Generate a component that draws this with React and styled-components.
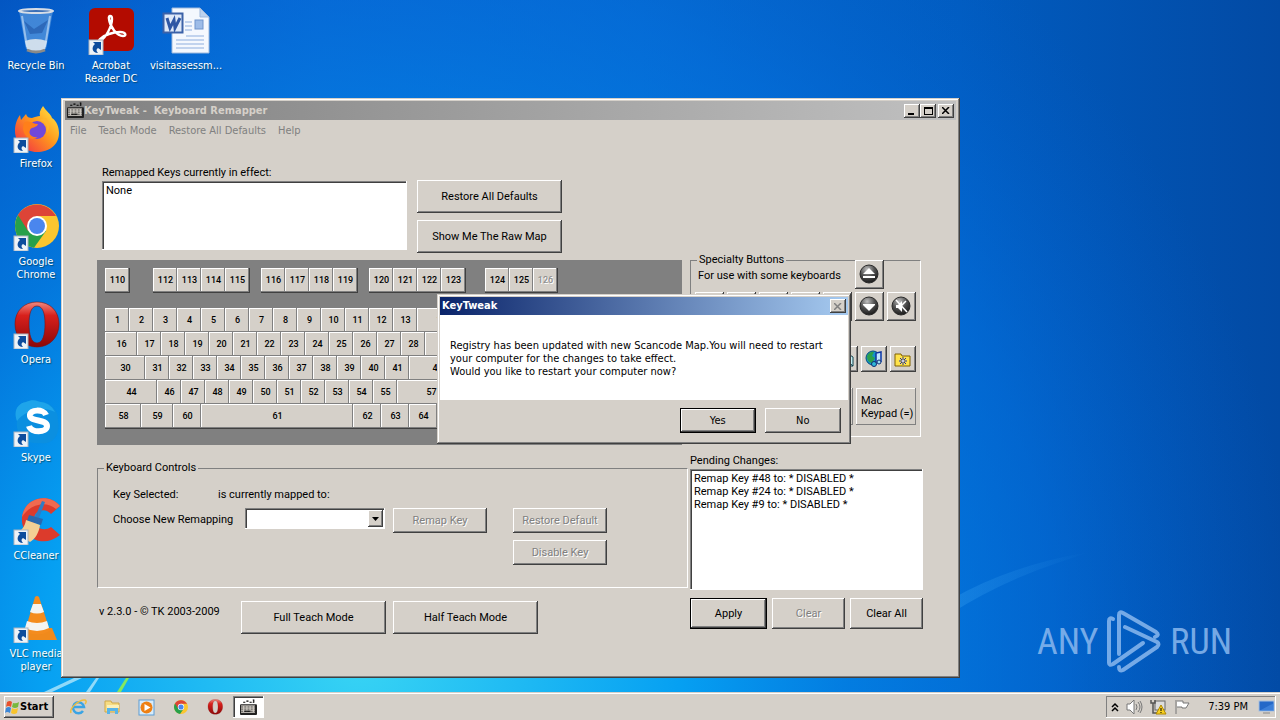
import React from 'react';
import styled, { createGlobalStyle, css } from 'styled-components';

const face = '#d5d0c9';
const sans = 'Roboto, "Liberation Sans", Arial, sans-serif';
const tahoma = '"DejaVu Sans Condensed", "DejaVu Sans", Tahoma, sans-serif';

const GlobalStyle = createGlobalStyle`
  * { box-sizing: border-box; }
  body { margin: 0; overflow: hidden; }
  button, select, input { font: inherit; color: inherit; }
`;

const raised = css`
  box-shadow: inset -1px -1px #404040, inset 1px 1px #fff, inset -2px -2px #808080;
`;
const sunken = css`
  box-shadow: inset -1px -1px #fff, inset 1px 1px #808080, inset 2px 2px #404040;
`;
const softSunken = css`
  box-shadow: inset -1px -1px #fff, inset 1px 1px #808080;
`;

/* ---------- desktop ---------- */

const Screen = styled.div`
  display: flex;
  flex-direction: column;
  height: 100vh;
  font: 11px/16px ${sans};
  color: #000;
`;

const Desktop = styled.main`
  position: relative;
  flex: 1;
  min-height: 0;
  overflow: hidden;
  background: linear-gradient(90deg, #0346b0 0%, #0a5cc6 25%, #0664c9 50%, #015cc0 75%, #024aa4 100%);
`;

const Wallpaper = styled.svg`
  position: absolute;
  inset: 0;
  width: 100%;
  height: 100%;
`;

const IconColumns = styled.div`
  position: relative;
  display: flex;
  gap: 3px;
  padding-top: 7px;
`;

const IconColumn = styled.div`
  display: flex;
  flex-direction: column;
  width: 72px;
`;

const DesktopIcon = styled.a`
  display: flex;
  flex-direction: column;
  align-items: center;
  gap: 4px;
  height: 98px;
  color: #fff;
  font: 11px/13px ${tahoma};
  text-align: center;
  text-decoration: none;
  text-shadow: 1px 1px 1px #0339;
  white-space: pre;
`;

const Watermark = styled.div`
  position: absolute;
  right: 48px;
  bottom: 18px;
  display: flex;
  align-items: center;
  gap: 8px;
  color: #8ab8ee;
  font: 36px/64px "Liberation Sans Narrow", "Roboto Condensed", Roboto, sans-serif;
  opacity: 0.85;
`;

/* ---------- windows ---------- */

const Frame = styled.section`
  position: absolute;
  left: ${props => props.$left}px;
  top: ${props => props.$top}px;
  padding: 3px;
  background: ${face};
  box-shadow: inset -1px -1px #404040, inset 1px 1px ${face}, inset -2px -2px #808080, inset 2px 2px #fff;
`;

const MainFrame = styled(Frame)`
  padding: 3px 4px 4px;
`;

const TitleBar = styled.header`
  display: flex;
  align-items: center;
  height: ${props => props.$active ? 18 : 19}px;
  padding: 0 2px;
  color: ${props => props.$active ? '#fff' : '#d5d0c9'};
  background: ${props => props.$active
    ? 'linear-gradient(90deg, #0a246a, #a6caf0)'
    : 'linear-gradient(90deg, #808080, #c0c0c0)'};
  font: bold 11px/18px ${tahoma};
  white-space: pre;
`;

const Title = styled.h1`
  flex: 1;
  margin: 0;
  font: inherit;
`;

const CaptionButton = styled.button`
  display: grid;
  place-items: center;
  width: 16px;
  height: 14px;
  margin-left: ${props => props.$apart ? 2 : 0}px;
  padding: 0;
  border: 0;
  background: ${face};
  ${raised}
`;

const MenuBar = styled.nav`
  display: flex;
  gap: 12px;
  padding: 1px 5px 0;
  height: 20px;
`;

const MenuItem = styled.button`
  padding: 0;
  border: 0;
  background: none;
  color: #808080;
  font: 11px/18px ${tahoma};
`;

const Button = styled.button`
  display: inline-flex;
  align-items: center;
  justify-content: center;
  width: ${props => props.$width}px;
  height: ${props => props.$height || 33}px;
  padding: 0;
  border: ${props => props.$default ? '1px solid #000' : '0'};
  background: ${face};
  white-space: nowrap;
  ${raised}
  &:disabled {
    color: #808080;
    text-shadow: 1px 1px #fff;
  }
`;

const Body = styled.div`
  display: grid;
  grid-template-columns: 591px 233px;
  gap: 2px;
  padding: 25px 33px 40px 32px;
`;

const Column = styled.div`
  display: flex;
  flex-direction: column;
`;

const RemappedRow = styled.div`
  display: flex;
  gap: 10px;
  padding-left: 5px;
`;

const ListField = styled.div`
  display: flex;
  flex-direction: column;
  width: ${props => props.$width}px;
`;

const ListBox = styled.select`
  width: 100%;
  height: ${props => props.$height}px;
  padding: 3px 2px 2px;
  border: 0;
  border-radius: 0;
  outline: 0;
  background: #fff;
  overflow: hidden;
  ${sunken}
  option {
    min-height: 13px;
    padding: 0 2px;
    line-height: 13px;
  }
`;

const SideButtons = styled.div`
  display: flex;
  flex-direction: column;
  gap: 7px;
  padding-top: 15px;
`;

/* ---------- keyboard ---------- */

const Keyboard = styled.div`
  width: 585px;
  height: 185px;
  margin-top: 7px;
  padding: 8px;
  background: #808080;
`;

const KeyGroup = styled.div`
  display: flex;
  margin-left: ${props => props.$before || 0}px;
  border-right: 1px solid #404040;
  border-bottom: 1px solid #404040;
`;

const FunctionRow = styled.div`
  display: flex;
  margin-bottom: 15px;
`;

const MainBlock = styled.div`
  width: 361px;
  border-right: 1px solid #404040;
  border-bottom: 1px solid #404040;
`;

const KeyRow = styled.div`
  display: flex;
`;

const Key = styled.button`
  width: ${props => props.$width}px;
  height: 24px;
  padding: 0 0 0 1px;
  border: 0;
  background: ${face};
  box-shadow: inset -1px -1px #808080, inset 1px 1px #fff;
  font: 500 9px/24px ${sans};
  &:disabled {
    color: #909090;
    text-shadow: 1px 1px #fff;
  }
`;

/* ---------- group boxes ---------- */

const GroupBox = styled.fieldset`
  min-width: 0;
  height: ${props => props.$height}px;
  margin: ${props => props.$before || 0}px ${props => props.$after || 0}px 0 0;
  padding: 0;
  border: 1px solid;
  border-color: #808080 #fff #fff #808080;
`;

const Legend = styled.legend`
  margin-left: 6px;
  padding: 0 2px;
  line-height: 14px;
`;

const Specialty = styled.div`
  margin-top: -7px;
  padding: 0 4px;
`;

const SpecialtyRow = styled.div`
  display: flex;
  justify-content: flex-end;
  gap: 3px;
  margin-top: ${props => props.$before || 0}px;
`;

const SpecialtyHint = styled.p`
  flex: 1;
  margin: 8px 0 0 3px;
`;

const EmptySlot = styled.span`
  width: 29px;
`;

const MediaButton = styled(Button)`
  width: ${props => props.$small ? 26 : 29}px;
  height: ${props => props.$small ? 26 : 29}px;
`;

const KeypadButton = styled(Button)`
  width: 60px;
  height: 37px;
  justify-content: flex-start;
  padding-left: 5px;
  line-height: 13px;
  text-align: left;
  box-shadow: inset -1px -1px #808080, inset 1px 1px #fff;
`;

const Controls = styled.div`
  display: grid;
  grid-template-columns: 132px 148px 120px 94px;
  row-gap: 5px;
  padding: 12px 15px 0;
`;

const SelectedKey = styled.div`
  grid-column: 1 / -1;
  display: flex;
`;

const SelectedLabel = styled.span`
  width: 105px;
`;

const ControlLabel = styled.label`
  padding-top: 4px;
`;

const Combo = styled.div`
  display: grid;
  width: 140px;
  height: 21px;
  padding: 2px;
  background: #fff;
  ${sunken}
`;

const ComboSelect = styled.select`
  grid-area: 1 / 1;
  appearance: none;
  border: 0;
  background: none;
  padding: 0 18px 0 2px;
`;

const ComboArrow = styled.span`
  grid-area: 1 / 1;
  justify-self: end;
  display: grid;
  place-items: center;
  width: 15px;
  background: ${face};
  pointer-events: none;
  ${raised}
`;

const ActionStack = styled.div`
  display: flex;
  flex-direction: column;
  gap: 7px;
`;

const FooterRow = styled.div`
  display: flex;
  align-items: flex-start;
  gap: ${props => props.$gap || 7}px;
  margin-top: ${props => props.$before}px;
`;

const Version = styled.span`
  width: 137px;
  margin-top: 3px;
  padding-left: 2px;
`;

/* ---------- message box ---------- */

const Message = styled.p`
  margin: 0;
  padding: 24px 25px 22px 10px;
  background: #fff;
  font: 11px/13px ${tahoma};
  white-space: pre-line;
`;

const MessageButtons = styled.footer`
  display: flex;
  justify-content: flex-end;
  gap: 9px;
  padding: 8px 7px 8px;
  font: 11px/13px ${tahoma};
`;

/* ---------- taskbar ---------- */

const Taskbar = styled.footer`
  display: flex;
  align-items: center;
  height: 28px;
  padding: 2px 4px 0;
  background: ${face};
  box-shadow: inset 0 1px ${face}, inset 0 2px #fff;
`;

const StartButton = styled.button`
  display: flex;
  align-items: center;
  height: 22px;
  width: 50px;
  padding: 0 1px;
  border: 0;
  background: ${face};
  font: bold 11px/20px ${tahoma};
  ${raised}
`;

const QuickLaunch = styled.div`
  flex: 1;
  display: flex;
  align-items: center;
  gap: 3px;
  padding-left: 9px;
`;

const QuickButton = styled.button`
  display: grid;
  place-items: center;
  width: 31px;
  height: 22px;
  padding: 0;
  border: 0;
  background: none;
  ${props => props.$active && css`
    background: #fff;
    ${sunken}
  `}
`;

const Tray = styled.div`
  display: flex;
  align-items: center;
  height: 22px;
  gap: 7px;
  padding: 0 1px 0 5px;
  font: 11px/20px ${tahoma};
  ${softSunken}
`;

const Clock = styled.time`
  margin: 0 3px 0 10px;
`;

/* ---------- drawings ---------- */

function ShortcutArrow() {
  return (
    <g>
      <rect x="2" y="33" width="14" height="15" fill="#eef3f8" stroke="#aab4c0" strokeWidth="1" />
      <path d="M6 35h8v8l-3-2c-2 1-2 3 0 5-6 0-7-6-3-9z" fill="#0d4c9c" />
    </g>
  );
}

function RecycleBinIcon() {
  return (
    <svg width="48" height="48">
      <path d="M7 4l7 38q10 6 20 0l7-38z" fill="#7eb1e6" fillOpacity=".5" />
      <path d="M13 34q10 -4 22 0l-2 8q-9 5-18 0z" fill="#e8ecf0" fillOpacity=".85" />
      <path d="M10 9l5 31M38 9l-5 31" stroke="#cfe4fa" strokeOpacity=".6" strokeWidth="2" />
      <path d="M12 14l10 8 14-9-6 13-12 1z" fill="#1a4c9c" fillOpacity=".5" />
      <ellipse cx="24" cy="4" rx="17" ry="2" fill="#3b6fb6" stroke="#d6dde6" strokeWidth="2" />
      <path d="M15 43q9 4 18 0" fill="none" stroke="#8a8a88" strokeWidth="3" />
    </svg>
  );
}

function AcrobatIcon() {
  return (
    <svg width="48" height="48">
      <rect x="2" y="1" width="45" height="43" rx="6" fill="#b30b00" />
      <path d="M13 34c6-3 12-15 12-22 0-4-4-4-3 0 1 8 8 17 14 17 4 0 3-4-3-4-7 0-16 3-20 7-3 4-1 4 0 2z" fill="none" stroke="#fff" strokeWidth="2.4" />
      <ShortcutArrow />
    </svg>
  );
}

function WordIcon() {
  return (
    <svg width="48" height="48">
      <path d="M10 1h28l9 9v36H10z" fill="#f4f8fe" stroke="#9fb9dc" />
      <path d="M38 1v9h9z" fill="#bcd2ee" stroke="#9fb9dc" />
      <path d="M14 33h28M14 37h28M14 41h28M24 29h18M23 15h7M23 19h7M23 23h7" stroke="#8eaede" />
      <rect x="33" y="13" width="8" height="9" fill="#9dbce8" stroke="#6f94cc" />
      <rect x="1.500" y="6.500" width="19" height="19" fill="#dfe9f8" stroke="#3c62a8" strokeWidth="2" />
      <path d="M5 11l3 10 4-8 1 8 5-10" fill="none" stroke="#2f57a4" strokeWidth="3" />
    </svg>
  );
}

function FirefoxIcon() {
  return (
    <svg width="48" height="48">
      <defs>
        <linearGradient id="foxBody" x1="1" y1="0" x2="0" y2="1">
          <stop offset="0" stopColor="#fff04a" />
          <stop offset=".45" stopColor="#ff9a1c" />
          <stop offset="1" stopColor="#f0204c" />
        </linearGradient>
      </defs>
      <path d="M31 1c3 5 8 8 9 12 5 3 7 10 7 15 0 12-10 19-22 19S3 38 3 26c0-7 2-12 5-16l1 5 5-6c1 3 3 4 6 4 3-1 5-2 8-2-1-4 1-7 3-10z" fill="url(#foxBody)" />
      <circle cx="25" cy="25" r="9" fill="#7148d8" />
      <path d="M12 18c5-4 8 1 14 1-1 4-7 3-8 6-2 5 3 8 8 7-8 6-18-3-14-14z" fill="#ff7f1a" />
      <path d="M27 15q10 2 8 13 5-8-1-15z" fill="#ffb52c" />
      <ShortcutArrow />
    </svg>
  );
}

function ChromeShape({ r }) {
  return (
    <svg width={r * 2} height={r * 2} viewBox="0 0 44 44">
      <circle cx="22" cy="22" r="22" fill="#fbc62f" />
      <path d="M22 22L3 11A22 22 0 0 0 19 43.800L31 27z" fill="#27a04a" />
      <path d="M3 11A22 22 0 0 1 41 12H22l-9 15z" fill="#dd4437" />
      <circle cx="22" cy="22" r="10" fill="#fff" />
      <circle cx="22" cy="22" r="8" fill="#4a86ee" />
    </svg>
  );
}

function ChromeIcon() {
  return (
    <svg width="48" height="48">
      <g transform="translate(3 1)"><ChromeShape r={22} /></g>
      <ShortcutArrow />
    </svg>
  );
}

function OperaShape({ size, children }) {
  return (
    <svg width={size} height={size} viewBox="0 0 48 48">
      <defs>
        <linearGradient id="operaRed" x1="0" y1="0" x2="0" y2="1">
          <stop offset="0" stopColor="#f08a80" />
          <stop offset=".3" stopColor="#d8201c" />
          <stop offset="1" stopColor="#8c0808" />
        </linearGradient>
      </defs>
      <path fillRule="evenodd" d="M25 1C38 1 47 10 47 23S38 46 25 46 3 36 3 23 12 1 25 1zM25 5c-6 0-8 8-8 18s2 19 8 19 8-9 8-19-2-18-8-18z" fill="url(#operaRed)" stroke="#7c1010" strokeWidth=".6" />
      {children}
    </svg>
  );
}

function OperaIcon() {
  return <OperaShape size={48}><ShortcutArrow /></OperaShape>;
}

function SkypeIcon() {
  return (
    <svg width="48" height="48">
      <path d="M14 3c8-4 13 0 15 0 10 0 18 9 17 19 3 14-6 25-18 22C12 46 3 34 5 22 1 12 6 4 14 3z" fill="#0b8fe0" />
      <path d="M14 3c8-4 13 0 15 0 8 1 12 6 14 10C30 6 12 12 5 22 1 12 6 4 14 3z" fill="#1ea4ea" />
      <path d="M34 16c-2-6-17-6-16 1 1 6 17 3 17 10s-16 7-18 0" fill="none" stroke="#fff" strokeWidth="6" />
      <ShortcutArrow />
    </svg>
  );
}

function CCleanerIcon() {
  return (
    <svg width="48" height="48">
      <path d="M48 9C38-4 13-1 10 20c-2 19 20 33 38 18l-9-8c-7 5-17 1-17-8 0-9 12-12 17-5z" fill="#dc3b2c" />
      <path d="M48 9C38-4 13-1 10 20 18 7 34 3 44 12z" fill="#f06a50" />
      <path d="M30 4l3 1-6 16-4-1z" fill="#2f7cc4" />
      <path d="M17 18l14 4-2 6-14-4z" fill="#2a68ae" />
      <path d="M14 23l14 5c-1 8-5 14-10 17L5 36c5-3 8-7 9-13z" fill="#f3cf95" />
      <ShortcutArrow />
    </svg>
  );
}

function VlcIcon() {
  return (
    <svg width="48" height="48">
      <path d="M11 33h29l5 12H7z" fill="#f08a1c" />
      <path d="M23 2q2-2 4 0l11 34q-13 7-25 0z" fill="#f48c1e" />
      <path d="M21 9h8l3 8q-7 3-14 0zM15 26q10 4 20 0l2 7q-12 6-24 0z" fill="#f4f4f2" />
      <ShortcutArrow />
    </svg>
  );
}

function KeyboardIcon({ size }) {
  return (
    <svg width={size} height={size} viewBox="0 0 16 16">
      <path d="M3 3h2M6 2h2M9 3h2M12 1h1v2h-1" fill="none" stroke="#000" />
      <rect x="0" y="5" width="16" height="10" rx="1" fill="#222" />
      <rect x="1" y="6" width="13" height="7" fill="#d5d0c9" />
      <path d="M1 7.500h13M1 9.500h13M1 11.500h13" stroke="#333" strokeDasharray="2 1" strokeWidth=".8" />
      <path d="M4 11.500h6" stroke="#000" />
    </svg>
  );
}

function CloseGlyph({ color }) {
  return <svg width="8" height="7"><path d="M0 0l7 7M7 0L0 7" stroke={color} strokeWidth="1.500" /></svg>;
}

function RoundIcon({ children, id }) {
  return (
    <svg width="21" height="21">
      <defs>
        <radialGradient id={id} cx=".4" cy=".25" r=".8">
          <stop offset="0" stopColor="#c0c0c0" />
          <stop offset=".5" stopColor="#505050" />
          <stop offset="1" stopColor="#141414" />
        </radialGradient>
      </defs>
      <circle cx="10" cy="10" r="9" fill={`url(#${id})`} stroke="#2a2a2a" />
      {children}
    </svg>
  );
}

function GlobeMusicIcon() {
  return (
    <svg width="18" height="18">
      <circle cx="8" cy="8" r="7" fill="#1494c8" stroke="#084c7c" />
      <path d="M2 6q3-5 7-4l-2 4 3 2-3 5q-5-1-5-7z" fill="#2ca04c" />
      <path d="M11 3h6v9q-3 3-6 3z" fill="#bfe6ff" />
      <path d="M11 13V3l5-1v10" fill="none" stroke="#1034a0" strokeWidth="1.500" />
      <circle cx="9" cy="14" r="2.500" fill="#30b8d8" stroke="#102c70" />
      <circle cx="14" cy="12" r="2" fill="#9ce0f4" stroke="#102c70" />
    </svg>
  );
}

function FavoritesIcon() {
  return (
    <svg width="18" height="16">
      <path d="M1 3h6l1 2h8v10H1z" fill="#ffe34a" stroke="#806000" />
      <path d="M9 6v8M5 10h8M6 7l6 6M12 7l-6 6" stroke="#2030a0" />
      <circle cx="9" cy="10" r="1" fill="#fff" />
    </svg>
  );
}

function MailIcon() {
  return (
    <svg width="18" height="16">
      <path d="M1 6l8-5 8 5v9H1z" fill="#c8f0f4" stroke="#10404c" />
      <path d="M1 15l8-7 8 7" fill="none" stroke="#10404c" />
    </svg>
  );
}

function StartLogo() {
  return (
    <svg width="15" height="15" viewBox="0 0 15 15">
      <path d="M2 2q3-2 5 0L6 7Q3 5 1 7z" fill="#e8502c" />
      <path d="M8 3q3 1 6-1l-1 5q-3 2-6 0z" fill="#78b83c" />
      <path d="M1 8q3-2 5 0l-1 5q-3-2-5 0z" fill="#3c88d8" />
      <path d="M7 8q3 2 6 0l-1 5q-3 2-6 0z" fill="#f8c42c" />
    </svg>
  );
}

function ExplorerIcon() {
  return (
    <svg width="17" height="17">
      <path d="M13 12A5.500 5.500 0 1 1 14 8H4" fill="none" stroke="#3ba4e4" strokeWidth="2.500" />
      <path d="M1 14C-1 9 10 0 15 1c2 1 1 3 0 4" fill="none" stroke="#efbd3c" strokeWidth="1.500" />
    </svg>
  );
}

function FolderIcon() {
  return (
    <svg width="17" height="16">
      <path d="M1 2h6l1 2h7v9H1z" fill="#f6dc84" stroke="#cfa848" />
      <path d="M3 6h12v3H3z" fill="#fbf0b8" />
      <path d="M3 15V9h11v6h-3v-3H6v3z" fill="#58b4e8" />
    </svg>
  );
}

function MediaPlayerIcon() {
  return (
    <svg width="17" height="17">
      <rect x="1" y="1" width="15" height="15" fill="#d8ecfa" stroke="#5c9cd4" />
      <circle cx="8.500" cy="8.500" r="6" fill="#ee8014" />
      <path d="M6.500 5v7l6-3.500z" fill="#fff" />
    </svg>
  );
}

function RunLogo() {
  return (
    <svg width="56" height="64" viewBox="0 0 56 64" fill="none" stroke="currentColor" strokeWidth="4" strokeLinecap="round" strokeLinejoin="round">
      <path d="M7 9Q3 7 3 11V53Q3 56 7 54L37 33" />
      <path d="M13 44V5Q13 1 17 3L50 22Q54 25 49 27" />
      <path d="M19 17L51 32Q54 34 51 37L17 60Q13 62 13 57" />
    </svg>
  );
}

/* ---------- data ---------- */

const iconColumns = [
  [
    ['Recycle Bin', RecycleBinIcon],
    ['Firefox', FirefoxIcon],
    ['Google\nChrome', ChromeIcon],
    ['Opera', OperaIcon],
    ['Skype', SkypeIcon],
    ['CCleaner', CCleanerIcon],
    ['VLC media\nplayer', VlcIcon],
  ],
  [['Acrobat\nReader DC', AcrobatIcon]],
  [['visitassessm...', WordIcon]],
];

const functionGroups = [
  { before: 0, keys: [110] },
  { before: 23, keys: [112, 113, 114, 115] },
  { before: 11, keys: [116, 117, 118, 119] },
  { before: 11, keys: [120, 121, 122, 123] },
  { before: 19, keys: [124, 125, 126] },
];

const range = (from, to) => Array.from({ length: to - from + 1 }, (_, i) => [from + i, 24]);

const keyRows = [
  [...range(1, 13), [15, 48]],
  [[16, 32], ...range(17, 28), [29, 40]],
  [[30, 40], ...range(31, 41), [43, 56]],
  [[44, 52], ...range(46, 55), [57, 68]],
  [[58, 36], [59, 32], [60, 28], [61, 152], [62, 28], [63, 28], [64, 28], [65, 28]],
];

const pending = [48, 24, 9];

/* ---------- parts ---------- */

function KeyboardMap() {
  return (
    <Keyboard>
      <FunctionRow>
        {functionGroups.map(group =>
          <KeyGroup key={group.keys[0]} $before={group.before}>
            {group.keys.map(k => <Key key={k} $width={24} disabled={k === 126}>{k}</Key>)}
          </KeyGroup>
        )}
      </FunctionRow>
      <MainBlock>
        {keyRows.map((row, i) =>
          <KeyRow key={i}>
            {row.map(([k, width]) => <Key key={k} $width={width}>{k}</Key>)}
          </KeyRow>
        )}
      </MainBlock>
    </Keyboard>
  );
}

function SpecialtyButtons() {
  return (
    <GroupBox $height={184} $before={88} $after={2}>
      <Legend>Specialty Buttons</Legend>
      <Specialty>
        <SpecialtyRow>
          <SpecialtyHint>For use with some keyboards</SpecialtyHint>
          <MediaButton aria-label="Eject">
            <RoundIcon id="ejectFill">
              <path d="M10 4l6 6H4zM4 12h12v2H4z" fill="#fff" />
            </RoundIcon>
          </MediaButton>
          <EmptySlot />
        </SpecialtyRow>
        <SpecialtyRow $before={3}>
          {['Back', 'Stop', 'Play', 'Next', 'Volume up'].map(name => <MediaButton key={name} aria-label={name} />)}
          <MediaButton aria-label="Volume down">
            <RoundIcon id="downFill">
              <path d="M4 8h12v1l-6 6-6-6z" fill="#fff" />
            </RoundIcon>
          </MediaButton>
          <MediaButton aria-label="Mute">
            <RoundIcon id="muteFill">
              <path d="M5 9h2l4-4v11l-4-4H5z" fill="#fff" />
              <path d="M5 4l11 12M15 5L8 12" stroke="#fff" strokeWidth="1.500" />
            </RoundIcon>
          </MediaButton>
        </SpecialtyRow>
        <SpecialtyRow $before={25}>
          <MediaButton $small aria-label="Mail"><MailIcon /></MediaButton>
          <MediaButton $small aria-label="Web media"><GlobeMusicIcon /></MediaButton>
          <MediaButton $small aria-label="Favorites"><FavoritesIcon /></MediaButton>
        </SpecialtyRow>
        <SpecialtyRow $before={16}>
          <KeypadButton aria-label="Power" />
          <KeypadButton>Mac<br />Keypad (=)</KeypadButton>
        </SpecialtyRow>
      </Specialty>
    </GroupBox>
  );
}

function KeyboardControls() {
  return (
    <GroupBox $height={127} $before={16}>
      <Legend>Keyboard Controls</Legend>
      <Controls>
        <SelectedKey>
          <SelectedLabel>Key Selected:</SelectedLabel>
          <span>is currently mapped to:</span>
        </SelectedKey>
        <ControlLabel htmlFor="remapping">Choose New Remapping</ControlLabel>
        <Combo>
          <ComboSelect id="remapping" />
          <ComboArrow><svg width="7" height="4"><path d="M0 0h7L3.500 4z" /></svg></ComboArrow>
        </Combo>
        <Button $width={94} $height={25} disabled>Remap Key</Button>
        <ActionStack>
          <Button $width={94} $height={25} disabled>Restore Default</Button>
          <Button $width={94} $height={25} disabled>Disable Key</Button>
        </ActionStack>
      </Controls>
    </GroupBox>
  );
}

function KeyTweakWindow() {
  return (
    <MainFrame $left={61} $top={98}>
      <TitleBar>
        <KeyboardIcon size={17} />
        <Title>KeyTweak -  Keyboard Remapper</Title>
        <CaptionButton aria-label="Minimize"><svg width="8" height="8"><path d="M0 6h6v2H0z" /></svg></CaptionButton>
        <CaptionButton aria-label="Maximize">
          <svg width="9" height="8"><path d="M0 0h9v8H0zM1 2v5h7V2z" fillRule="evenodd" /></svg>
        </CaptionButton>
        <CaptionButton $apart aria-label="Close"><CloseGlyph color="#000" /></CaptionButton>
      </TitleBar>
      <MenuBar>
        {['File', 'Teach Mode', 'Restore All Defaults', 'Help'].map(item => <MenuItem key={item}>{item}</MenuItem>)}
      </MenuBar>
      <Body>
        <Column>
          <RemappedRow>
            <ListField $width={305}>
              <label htmlFor="current">Remapped Keys currently in effect:</label>
              <ListBox id="current" size={5} $height={69}>
                <option>None</option>
              </ListBox>
            </ListField>
            <SideButtons>
              <Button $width={145}>Restore All Defaults</Button>
              <Button $width={145}>Show Me The Raw Map</Button>
            </SideButtons>
          </RemappedRow>
          <KeyboardMap />
          <KeyboardControls />
          <FooterRow $before={13}>
            <Version>v 2.3.0 - © TK 2003-2009</Version>
            <Button $width={145}>Full Teach Mode</Button>
            <Button $width={145}>Half Teach Mode</Button>
          </FooterRow>
        </Column>
        <Column>
          <SpecialtyButtons />
          <FooterRow $before={16}>
            <ListField $width={233}>
              <label htmlFor="pending">Pending Changes:</label>
              <ListBox id="pending" size={8} $height={121}>
                {pending.map(k => <option key={k}>Remap Key #{k} to: * DISABLED *</option>)}
              </ListBox>
            </ListField>
          </FooterRow>
          <FooterRow $before={8} $gap={5}>
            <Button $width={77} $height={31} $default>Apply</Button>
            <Button $width={73} $height={31} disabled>Clear</Button>
            <Button $width={73} $height={31}>Clear All</Button>
          </FooterRow>
        </Column>
      </Body>
    </MainFrame>
  );
}

function RestartDialog() {
  return (
    <Frame $left={437} $top={294} role="dialog" aria-label="KeyTweak">
      <TitleBar $active>
        <Title>KeyTweak</Title>
        <CaptionButton aria-label="Close"><CloseGlyph color="#808080" /></CaptionButton>
      </TitleBar>
      <Message>
        {'Registry has been updated with new Scancode Map.You will need to restart\nyour computer for the changes to take effect.\nWould you like to restart your computer now?'}
      </Message>
      <MessageButtons>
        <Button $width={76} $height={25} $default>Yes</Button>
        <Button $width={76} $height={25}>No</Button>
      </MessageButtons>
    </Frame>
  );
}

function Background() {
  return (
    <Wallpaper viewBox="0 0 1280 692" preserveAspectRatio="none">
      <defs>
        <radialGradient id="glow" gradientUnits="userSpaceOnUse" cx="360" cy="660" r="940">
          <stop offset="0" stopColor="#38d4f4" />
          <stop offset=".34" stopColor="#06a0f2" />
          <stop offset=".52" stopColor="#0386ea" stopOpacity=".75" />
          <stop offset=".74" stopColor="#0374e4" stopOpacity=".5" />
          <stop offset="1" stopColor="#0360d0" stopOpacity="0" />
        </radialGradient>
        <linearGradient id="ray">
          <stop offset="0" stopColor="#4cb4fc" stopOpacity=".25" />
          <stop offset="1" stopColor="#4cb4fc" stopOpacity="0" />
        </linearGradient>
      </defs>
      <rect width="1280" height="692" fill="url(#glow)" />
      <path d="M950 600Q1010 565 1090 552L1060 562Q1000 582 950 614z" fill="url(#ray)" />
      <path d="M44 692l30-14h8l-30 14z" fill="#c8f0fc" fillOpacity=".7" />
      <path d="M86 692l10-14h3l-9 14z" fill="#c8f0fc" fillOpacity=".7" />
      <path d="M117 692l9-14h3l-8 14z" fill="#84e860" />
    </Wallpaper>
  );
}

export default function App() {
  return (
    <Screen>
      <GlobalStyle />
      <Desktop>
        <Background />
        <IconColumns>
          {iconColumns.map((column, i) =>
            <IconColumn key={i}>
              {column.map(([label, Icon]) =>
                <DesktopIcon key={label} href="#"><Icon />{label}</DesktopIcon>
              )}
            </IconColumn>
          )}
        </IconColumns>
        <Watermark>ANY<RunLogo />RUN</Watermark>
        <KeyTweakWindow />
        <RestartDialog />
      </Desktop>
      <Taskbar>
        <StartButton><StartLogo />Start</StartButton>
        <QuickLaunch>
          <QuickButton aria-label="Internet Explorer"><ExplorerIcon /></QuickButton>
          <QuickButton aria-label="Explorer"><FolderIcon /></QuickButton>
          <QuickButton aria-label="Media Player"><MediaPlayerIcon /></QuickButton>
          <QuickButton aria-label="Chrome"><ChromeShape r={7} /></QuickButton>
          <QuickButton aria-label="Opera"><OperaShape size={16} /></QuickButton>
          <QuickButton $active aria-label="KeyTweak"><KeyboardIcon size={17} /></QuickButton>
        </QuickLaunch>
        <Tray>
          <svg width="8" height="11" fill="none" stroke="#000" strokeWidth="1.500"><path d="M1 5l3-3 3 3M1 9l3-3 3 3" /></svg>
          <svg width="17" height="16" fill="none" stroke="#777">
            <path d="M1 5h3l4-4v14l-4-4H1z" fill="#fff" />
            <path d="M10 5q2 3 0 6M12 3q4 5 0 10M14 2q4 6 0 12" />
          </svg>
          <svg width="17" height="16">
            <rect x="5" y="2" width="10" height="9" fill="#ddd" stroke="#666" />
            <path d="M1 1v3h4V1M3 4v10h4" fill="none" stroke="#555" strokeWidth="1.500" />
            <path d="M11 6l5 9H6z" fill="#f8d020" stroke="#b08800" />
            <path d="M11 9v3M11 13v1" stroke="#000" />
          </svg>
          <svg width="17" height="16"><path d="M2 1v14M3 2h6v2h6l-3 5H8V8H3" fill="#fff" stroke="#777" /></svg>
          <Clock>7:39 PM</Clock>
          <svg width="17" height="16">
            <rect x="1" y="2" width="15" height="10" fill="#2468c8" stroke="#a8c0e0" />
            <path d="M1 12l15-8v8z" fill="#4c90e4" fillOpacity=".6" />
            <path d="M5 14h7" stroke="#888" />
          </svg>
        </Tray>
      </Taskbar>
    </Screen>
  );
}
